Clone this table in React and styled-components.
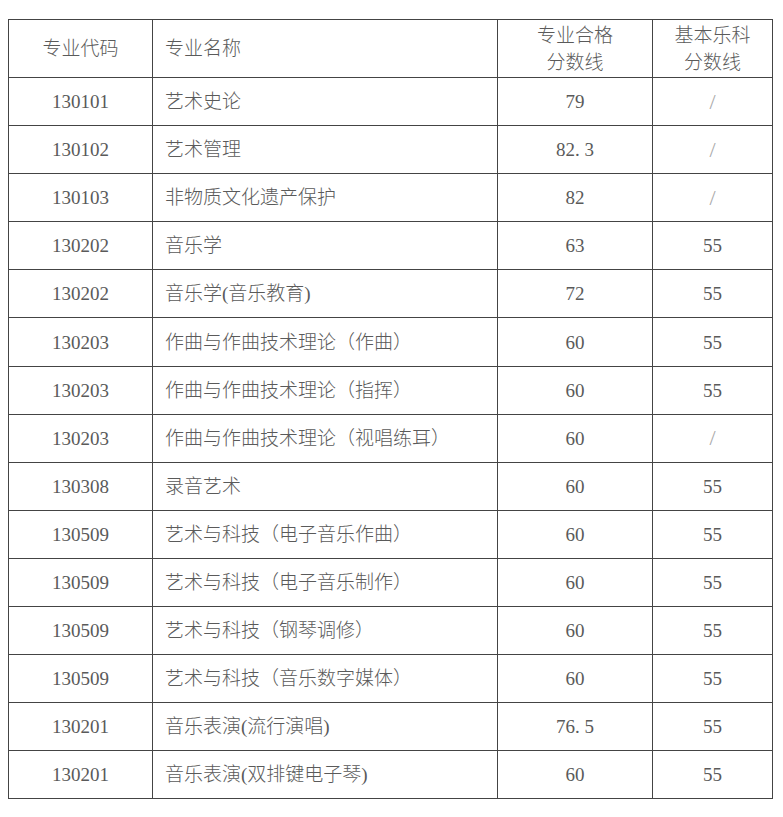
import React from "react";
import styled, { createGlobalStyle } from "styled-components";

const rows = [
  ["130101", "艺术史论", "79", "/"],
  ["130102", "艺术管理", "82.3", "/"],
  ["130103", "非物质文化遗产保护", "82", "/"],
  ["130202", "音乐学", "63", "55"],
  ["130202", "音乐学(音乐教育)", "72", "55"],
  ["130203", "作曲与作曲技术理论（作曲）", "60", "55"],
  ["130203", "作曲与作曲技术理论（指挥）", "60", "55"],
  ["130203", "作曲与作曲技术理论（视唱练耳）", "60", "/"],
  ["130308", "录音艺术", "60", "55"],
  ["130509", "艺术与科技（电子音乐作曲）", "60", "55"],
  ["130509", "艺术与科技（电子音乐制作）", "60", "55"],
  ["130509", "艺术与科技（钢琴调修）", "60", "55"],
  ["130509", "艺术与科技（音乐数字媒体）", "60", "55"],
  ["130201", "音乐表演(流行演唱)", "76.5", "55"],
  ["130201", "音乐表演(双排键电子琴)", "60", "55"],
];

const GlobalStyle = createGlobalStyle`
  body {
    margin: 0;
    background: #fff;
  }
`;

const Page = styled.div`
  padding: 19px 11px 0 8px;
`;

const Table = styled.table`
  width: 764px;
  border-collapse: collapse;
  table-layout: fixed;
  border: 1.5px solid #444;
  font-family: "Liberation Serif", "Noto Sans CJK SC", serif;
  font-size: 19px;
  font-weight: 300;
  color: #5a5a5a;
`;

const HeadRow = styled.tr`
  height: 58px;
`;

const Row = styled.tr`
  height: 48.1px;
`;

const Cell = styled.td`
  border: 1.5px solid #444;
  padding: 0 ${(p) => (p.$left ? "12px" : "0")};
  text-align: ${(p) => (p.$left ? "left" : "center")};
  vertical-align: middle;
  line-height: 27px;
  white-space: nowrap;
`;

const Slash = styled.span`
  color: #aaa;
  font-size: 22px;
`;

export default function App() {
  return (
    <Page>
      <GlobalStyle />
      <Table>
        <colgroup>
          <col style={{ width: 144 }} />
          <col style={{ width: 345 }} />
          <col style={{ width: 155 }} />
          <col style={{ width: 120 }} />
        </colgroup>
        <tbody>
          <HeadRow>
            <Cell>专业代码</Cell>
            <Cell $left>专业名称</Cell>
            <Cell>
              专业合格
              <br />
              分数线
            </Cell>
            <Cell>
              基本乐科
              <br />
              分数线
            </Cell>
          </HeadRow>
          {rows.map((r, i) => (
            <Row key={i}>
              <Cell>{r[0]}</Cell>
              <Cell $left>{r[1]}</Cell>
              <Cell>{r[2].replace(".", ". ")}</Cell>
              <Cell>{r[3] === "/" ? <Slash>/</Slash> : r[3]}</Cell>
            </Row>
          ))}
        </tbody>
      </Table>
    </Page>
  );
}
